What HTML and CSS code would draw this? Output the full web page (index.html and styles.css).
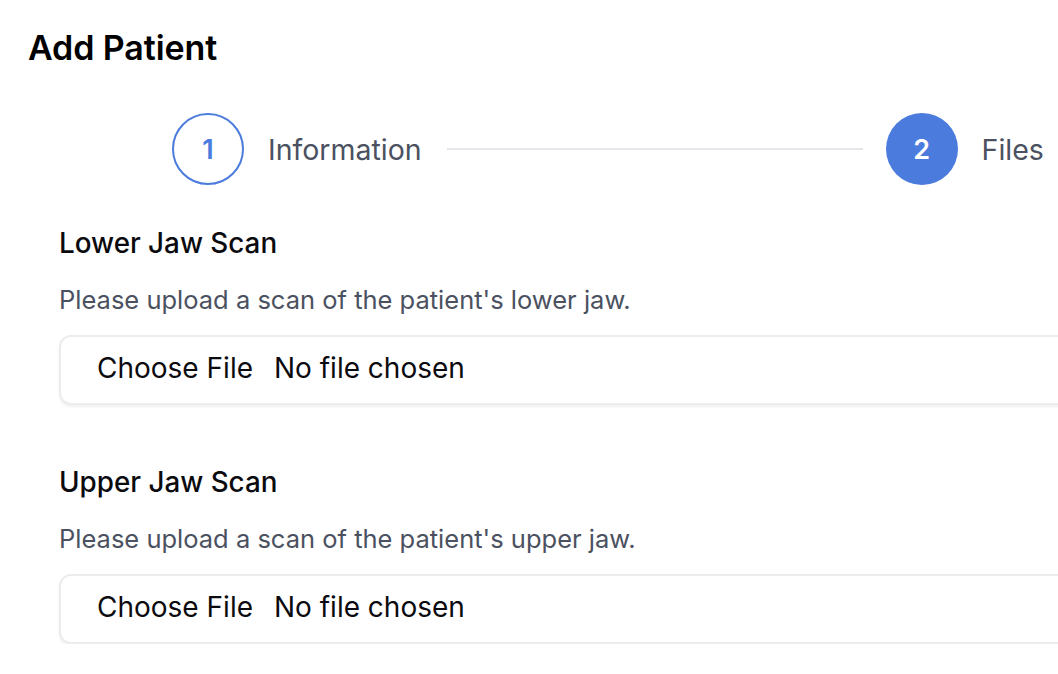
FILE: index.html
```html
<!DOCTYPE html>
<html>
<head>
<meta charset="utf-8">
<link rel="stylesheet" href="styles.css">
</head>
<body>
<div class="page">
  <h1 class="title">Add Patient</h1>
  <div class="stepper">
    <div class="step">
      <div class="circle outline">1</div>
      <span class="step-label">Information</span>
    </div>
    <div class="connector"></div>
    <div class="step">
      <div class="circle filled">2</div>
      <span class="step-label">Files</span>
    </div>
  </div>
  <div class="form">
    <div class="field">
      <div class="label">Lower Jaw Scan</div>
      <div class="desc">Please upload a scan of the patient's lower jaw.</div>
      <div class="file-box"><span class="btn">Choose File</span><span class="status">No file chosen</span></div>
    </div>
    <div class="field">
      <div class="label">Upper Jaw Scan</div>
      <div class="desc">Please upload a scan of the patient's upper jaw.</div>
      <div class="file-box"><span class="btn">Choose File</span><span class="status">No file chosen</span></div>
    </div>
  </div>
</div>
</body>
</html>
```

FILE: styles.css
```css
html, body {
  margin: 0;
  padding: 0;
  background: #ffffff;
  overflow: hidden;
}
body {
  font-family: Inter, "Noto Sans", sans-serif;
  color: #111111;
}
.page {
  padding: 26px 0 0 28px;
}
.title {
  margin: 0;
  font-size: 34px;
  font-weight: 600;
  line-height: 44px;
  color: #000000;
  letter-spacing: -0.1px;
}
.stepper {
  display: flex;
  align-items: center;
  margin-top: 43px;
  padding-left: 144px;
  width: 900px;
}
.step {
  display: flex;
  align-items: center;
  gap: 24px;
}
.circle {
  width: 72px;
  height: 72px;
  box-sizing: border-box;
  border-radius: 50%;
  display: flex;
  align-items: center;
  justify-content: center;
  font-size: 27px;
  font-weight: 600;
}
.circle.outline {
  border: 2px solid #4b7bdc;
  color: #4b7bdc;
  background: #ffffff;
}
.circle.filled {
  background: #4b7bdc;
  color: #ffffff;
}
.step-label {
  font-size: 28.5px;
  color: #4b5160;
  white-space: nowrap;
}
.connector {
  width: 416px;
  height: 2px;
  background: #e5e7eb;
  margin: 0 23px 0 25px;
}
.form {
  padding-left: 31px;
  margin-top: 40px;
  display: flex;
  flex-direction: column;
  gap: 59px;
}
.field {
  display: flex;
  flex-direction: column;
}
.label {
  font-size: 27.8px;
  font-weight: 500;
  line-height: 36px;
  color: #0b0b0f;
}
.desc {
  font-size: 25.5px;
  line-height: 34px;
  color: #4b5160;
  margin-top: 22px;
}
.file-box {
  margin-top: 18px;
  width: 1100px;
  height: 70px;
  box-sizing: border-box;
  border: 2px solid #ececee;
  border-radius: 12px;
  box-shadow: 0 2px 3px rgba(0, 0, 0, 0.06);
  display: flex;
  align-items: center;
  padding-left: 36px;
  padding-bottom: 4px;
  font-size: 28px;
  color: #0b0b0f;
}
.btn {
  margin-right: 21px;
}
```
